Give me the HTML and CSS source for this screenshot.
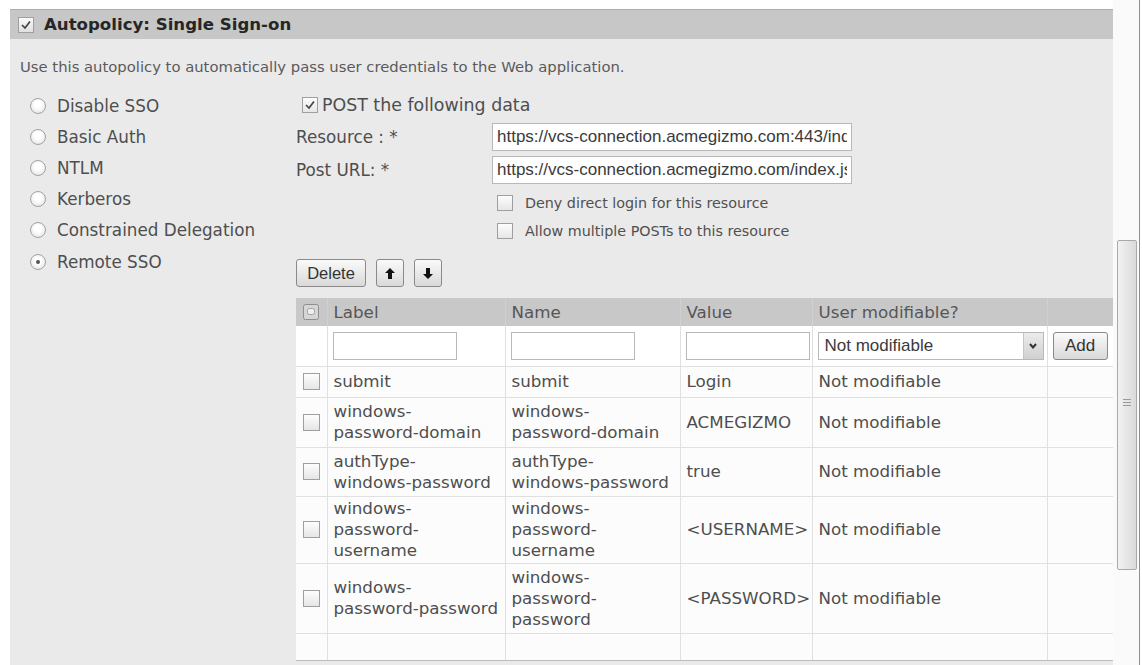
FILE: index.html
```html
<!DOCTYPE html>
<html lang="en">
<head>
    <meta charset="UTF-8">
    <title>Autopolicy: Single Sign-on</title>
    <link rel="stylesheet" href="styles.css">
</head>
<body>
<div class="page">
    <div class="panel">
        <div class="panel-head">
            <span class="check checked"><svg viewBox="0 0 14 14"><polyline points="3,7 6,10 11,3.5"/></svg></span>
            <h2>Autopolicy: Single Sign-on</h2>
        </div>

        <div class="panel-body">
            <p class="desc">Use this autopolicy to automatically pass user credentials to the Web application.</p>

            <div class="sso">
                <ul class="methods">
                    <li><span class="radio"></span>Disable SSO</li>
                    <li><span class="radio"></span>Basic Auth</li>
                    <li><span class="radio"></span>NTLM</li>
                    <li><span class="radio"></span>Kerberos</li>
                    <li><span class="radio"></span>Constrained Delegation</li>
                    <li><span class="radio on"></span>Remote SSO</li>
                </ul>

                <div class="remote">
                    <div class="post-row">
                        <span class="check checked"><svg viewBox="0 0 14 14"><polyline points="3,7 6,10 11,3.5"/></svg></span>
                        POST the following data
                    </div>

                    <div class="field">
                        <span class="field-label">Resource : *</span>
                        <input class="text-input" type="text" value="https://vcs-connection.acmegizmo.com:443/index.jsp">
                    </div>
                    <div class="field second">
                        <span class="field-label">Post URL: *</span>
                        <input class="text-input" type="text" value="https://vcs-connection.acmegizmo.com/index.jsp">
                    </div>

                    <div class="opt first"><span class="check"></span>Deny direct login for this resource</div>
                    <div class="opt"><span class="check"></span>Allow multiple POSTs to this resource</div>

                    <div class="toolbar">
                        <button class="btn delete">Delete</button>
                        <button class="btn arrow"><svg viewBox="0 0 10 11"><polygon points="5,0 10,5 7,5 7,11 3,11 3,5 0,5"/></svg></button>
                        <button class="btn arrow"><svg viewBox="0 0 10 11"><polygon points="5,11 10,6 7,6 7,0 3,0 3,6 0,6"/></svg></button>
                    </div>

                    <table class="post-data">
                        <colgroup>
                            <col class="c-check">
                            <col class="c-label">
                            <col class="c-name">
                            <col class="c-value">
                            <col class="c-mod">
                            <col class="c-add">
                        </colgroup>
                        <thead>
                            <tr>
                                <th class="cb"><svg class="all" viewBox="0 0 16 16"><rect x="0.5" y="0.5" width="15" height="15" rx="2"/><rect class="inner" x="4.5" y="4.5" width="7" height="6" rx="2"/></svg></th>
                                <th>Label</th>
                                <th>Name</th>
                                <th>Value</th>
                                <th>User modifiable?</th>
                                <th></th>
                            </tr>
                        </thead>
                        <tbody>
                            <tr class="new-row">
                                <td class="cb"></td>
                                <td><input class="cell-input" type="text"></td>
                                <td><input class="cell-input" type="text"></td>
                                <td><input class="cell-input" type="text"></td>
                                <td>
                                    <div class="select">
                                        <span>Not modifiable</span>
                                        <span class="select-btn"><svg viewBox="0 0 8 6"><polyline points="1,1 4,4.5 7,1"/></svg></span>
                                    </div>
                                </td>
                                <td><button class="btn add">Add</button></td>
                            </tr>
                            <tr class="single">
                                <td class="cb"><span class="check"></span></td>
                                <td>submit</td>
                                <td>submit</td>
                                <td>Login</td>
                                <td>Not modifiable</td>
                                <td></td>
                            </tr>
                            <tr>
                                <td class="cb"><span class="check"></span></td>
                                <td>windows-<br>password-domain</td>
                                <td>windows-<br>password-domain</td>
                                <td>ACMEGIZMO</td>
                                <td>Not modifiable</td>
                                <td></td>
                            </tr>
                            <tr class="snug">
                                <td class="cb"><span class="check"></span></td>
                                <td>authType-<br>windows-password</td>
                                <td>authType-<br>windows-password</td>
                                <td>true</td>
                                <td>Not modifiable</td>
                                <td></td>
                            </tr>
                            <tr class="tight">
                                <td class="cb"><span class="check"></span></td>
                                <td>windows-<br>password-<br>username</td>
                                <td>windows-<br>password-<br>username</td>
                                <td>&lt;USERNAME&gt;</td>
                                <td>Not modifiable</td>
                                <td></td>
                            </tr>
                            <tr class="snug">
                                <td class="cb"><span class="check"></span></td>
                                <td>windows-<br>password-password</td>
                                <td>windows-<br>password-<br>password</td>
                                <td>&lt;PASSWORD&gt;</td>
                                <td>Not modifiable</td>
                                <td></td>
                            </tr>
                            <tr class="empty">
                                <td class="cb"></td>
                                <td></td>
                                <td></td>
                                <td></td>
                                <td></td>
                                <td></td>
                            </tr>
                        </tbody>
                    </table>
                </div>
            </div>
        </div>
    </div>

    <div class="vscroll">
        <div class="thumb"><span class="grip"></span></div>
    </div>
</div>
</body>
</html>
```

FILE: styles.css
```css
body {
    margin: 0;
    background: #fff;
    font-family: "DejaVu Sans", Verdana, sans-serif;
    color: #4e4e4e;
    overflow: hidden;
}
.page {
    display: flex;
    height: 665px;
}
.panel {
    width: 1103px;
    margin: 9px 0 0 10px;
    display: flex;
    flex-direction: column;
}
.panel-head {
    height: 30px;
    box-sizing: border-box;
    background: #c7c7c7;
    border-top: 1px solid #adadad;
    display: flex;
    align-items: center;
    gap: 10px;
    padding-left: 8px;
}
.panel-head h2 {
    margin: 0;
    font-size: 16.6px;
    font-weight: bold;
    color: #262626;
}
.panel-head .check {
    background: linear-gradient(#fafafa, #e0e0e0);
}
.panel-body {
    flex: 1;
    background: #eaeaea;
    padding: 19px 0 0 10px;
}
.desc {
    margin: 0;
    font-size: 14.8px;
    line-height: 18px;
    color: #5a5a5a;
}
.sso {
    display: flex;
    margin-top: 14px;
}

/* left radio list */
.methods {
    list-style: none;
    margin: 0;
    padding: 0 0 0 10px;
    width: 276px;
    box-sizing: border-box;
}
.methods li {
    height: 31.2px;
    display: flex;
    align-items: center;
    gap: 11px;
    font-size: 16.8px;
}
.radio {
    width: 16px;
    height: 16px;
    box-sizing: border-box;
    border: 1px solid #a3a3a3;
    border-radius: 50%;
    background: radial-gradient(circle at 50% 40%, #fff 30%, #dedede 100%);
    position: relative;
    flex: none;
}
.radio.on::after {
    content: "";
    position: absolute;
    left: 5px;
    top: 5px;
    width: 4px;
    height: 4px;
    border-radius: 50%;
    background: #555;
}

/* checkboxes */
.check {
    display: inline-block;
    width: 16px;
    height: 16px;
    box-sizing: border-box;
    border: 1px solid #9f9f9f;
    background: linear-gradient(#fdfdfd, #e6e6e6);
    flex: none;
}
.check svg {
    display: block;
    width: 14px;
    height: 14px;
}
.check polyline {
    fill: none;
    stroke: #444;
    stroke-width: 1.7;
}

/* right column */
.remote {
    display: flex;
    flex-direction: column;
    align-items: flex-start;
}
.post-row {
    height: 28px;
    margin-top: 1px;
    display: flex;
    align-items: center;
    gap: 4px;
    padding-left: 6px;
    font-size: 17.4px;
}
.field {
    display: flex;
    align-items: center;
    height: 28px;
    margin-top: 4px;
    font-size: 16.8px;
}
.field.second {
    margin-top: 5px;
}
.field-label {
    width: 196px;
}
.text-input {
    width: 360px;
    height: 28px;
    box-sizing: border-box;
    margin: 0;
    border: 1px solid #b8b8b8;
    padding: 0 4px;
    font-family: "Liberation Sans", Arial, sans-serif;
    font-size: 17px;
    color: #3a3a3a;
    background: #fff;
}
.opt {
    height: 28px;
    display: flex;
    align-items: center;
    gap: 12px;
    padding-left: 201px;
    font-size: 14.3px;
    color: #505050;
}
.opt.first {
    margin-top: 5px;
}
.toolbar {
    display: flex;
    gap: 10px;
    margin-top: 14px;
}
.btn {
    height: 28px;
    box-sizing: border-box;
    border: 1px solid #8a8a8a;
    border-radius: 3px;
    background: linear-gradient(#fafafa, #d9d9d9);
    font-family: "Liberation Sans", Arial, sans-serif;
    font-size: 16.5px;
    color: #333;
    padding: 0;
    display: flex;
    align-items: center;
    justify-content: center;
}
.btn.delete {
    width: 70px;
}
.btn.arrow {
    width: 28px;
}
.btn.arrow svg {
    width: 10px;
    height: 11px;
    fill: #111;
}
.btn.add {
    width: 55px;
    font-size: 17px;
}

/* data table */
.post-data {
    margin-top: 11px;
    width: 817px;
    table-layout: fixed;
    border-collapse: collapse;
    font-size: 16.7px;
}
.c-check { width: 31px; }
.c-label { width: 178px; }
.c-name { width: 175px; }
.c-value { width: 132px; }
.c-mod { width: 235px; }
.c-add { width: 66px; }
.post-data th {
    height: 28px;
    background: #c8c8c8;
    text-align: left;
    font-weight: normal;
    color: #565656;
    padding: 0 6px;
    border-left: 1px solid #d0d0d0;
}
.post-data th:first-child {
    border-left: none;
}
.post-data td {
    background: #fcfcfc;
    border: 1px solid #e0e0e0;
    padding: 3.5px 6px;
    line-height: 21px;
    vertical-align: middle;
    white-space: nowrap;
}
.post-data td:first-child {
    border-left: none;
}
.post-data td:last-child {
    border-right: none;
}
.post-data .cb {
    padding: 0 0 0 7px;
}
.post-data td.cb .check {
    display: block;
    width: 17px;
    height: 17px;
}
svg.all {
    display: block;
    width: 16px;
    height: 16px;
    fill: #d6d6d6;
    stroke: #8e8e8e;
}
svg.all .inner {
    fill: #efefef;
    stroke: #a0a0a0;
}
.post-data tr.new-row td {
    height: 40px;
    box-sizing: border-box;
    background: #fff;
    padding: 0 0 0 5px;
    border-top: none;
}
.post-data tr.single td {
    height: 31px;
    box-sizing: border-box;
}
.post-data tr.snug td {
    padding-top: 3px;
    padding-bottom: 3px;
}
.post-data tr.tight td {
    padding-top: 1.5px;
    padding-bottom: 1.5px;
}
.post-data tr.empty td {
    height: 27px;
    box-sizing: border-box;
    border-bottom: 1px solid #bdbdbd;
}
.cell-input {
    width: 124px;
    height: 28px;
    box-sizing: border-box;
    margin: 0;
    border: 1px solid #b8b8b8;
    background: #fff;
}
.select {
    width: 226px;
    height: 28px;
    box-sizing: border-box;
    border: 1px solid #b8b8b8;
    background: #fff;
    display: flex;
    align-items: center;
    justify-content: space-between;
    padding-left: 6px;
    font-family: "Liberation Sans", Arial, sans-serif;
    font-size: 17px;
    color: #3a3a3a;
}
.select-btn {
    width: 20px;
    height: 26px;
    box-sizing: border-box;
    border-left: 1px solid #c4c4c4;
    background: linear-gradient(#ececec, #d0d0d0);
    display: flex;
    align-items: center;
    justify-content: center;
}
.select-btn svg {
    width: 8px;
    height: 6px;
    fill: none;
    stroke: #333;
    stroke-width: 2;
}

/* outer scrollbar */
.vscroll {
    width: 26px;
    border-right: 1px solid #8f8f8f;
    background: #fafafa;
}
.thumb {
    margin: 240px 0 0 4px;
    width: 20px;
    height: 330px;
    box-sizing: border-box;
    border: 1px solid #a9a9a9;
    border-radius: 2px;
    background: linear-gradient(90deg, #f2f2f2, #dadada);
    display: flex;
    justify-content: center;
    padding-top: 158px;
}
.grip {
    width: 8px;
    height: 7px;
    background: repeating-linear-gradient(#9a9a9a 0 1px, transparent 1px 3px);
}
```
